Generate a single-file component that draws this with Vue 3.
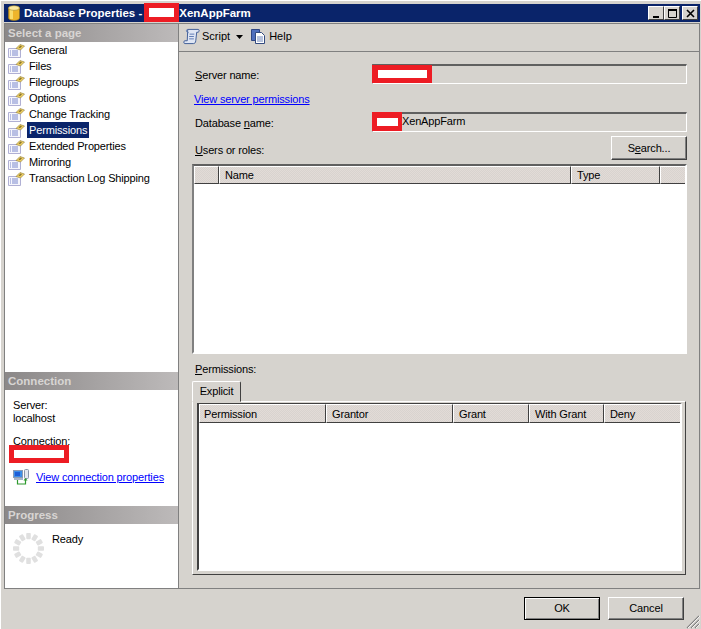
<script setup>
const pages = ['General','Files','Filegroups','Options','Change Tracking','Permissions','Extended Properties','Mirroring','Transaction Log Shipping']
const userCols = [{ n: '', w: 25 }, { n: 'Name', w: 352 }, { n: 'Type', w: 89 }, { n: '', w: 26 }]
const permCols = [{ n: 'Permission', w: 127 }, { n: 'Grantor', w: 127 }, { n: 'Grant', w: 76 }, { n: 'With Grant', w: 75 }, { n: 'Deny', w: 78 }]
const spokes = Array.from({ length: 12 }, (_, i) => i * 30)
</script>

<template>
  <div class="window">
    <div class="titlebar">
      <svg class="dbicon" width="12" height="16" viewBox="0 0 12 16">
        <path d="M.5 3v10c0 1.300 2.300 2.500 5.500 2.500s5.500-1.200 5.500-2.500V3z" fill="#eeb52c" stroke="#9a7a20" stroke-width=".6"/>
        <rect x="2" y="4" width="3" height="10" fill="#f9dc6c"/>
        <ellipse cx="6" cy="3" rx="5.500" ry="2.300" fill="#fbe9a0" stroke="#a58a2c" stroke-width=".6"/>
      </svg>
      <span class="titletext">Database Properties -</span>
      <span class="redact title-redact"><i></i></span>
      <span class="titletext">XenAppFarm</span>
      <span class="caps">
        <button class="cap"><svg width="9" height="9" viewBox="0 0 9 9"><rect x="1" y="7" width="6" height="2"/></svg></button>
        <button class="cap"><svg width="9" height="9" viewBox="0 0 9 9"><path d="M.5 1.500h8v7h-8z" fill="none" stroke="#000"/><rect y="0" width="9" height="2"/></svg></button>
        <button class="cap capx"><svg width="9" height="9" viewBox="0 0 9 9"><path d="M1 1l7 7M8 1L1 8" stroke="#000" stroke-width="1.600"/></svg></button>
      </span>
    </div>

    <div class="body">
      <aside class="side">
        <h3 class="sechead">Select a page</h3>
        <ul class="pages">
          <li v-for="p in pages" :key="p">
            <svg class="pageicon" width="17" height="15" viewBox="0 0 17 15">
              <path d="M.5 5.500h12v9H.5z" fill="#f6f6fc" stroke="#b0b0d4"/>
              <path d="M2 8h1M4 8h6M2 10h1M4 10h6M2 12h1M4 12h6" stroke="#7a88cc"/>
              <path d="M8 5.500l4-4 4.500 1.500-4 4z" fill="#f0d060" stroke="#8d7a3c" stroke-width=".6"/>
              <path d="M10.500 4.500l2-2 1.500.7-2 2z" fill="#8a7632"/>
            </svg>
            <span class="pagename" :class="{ sel: p === 'Permissions' }">{{ p }}</span>
          </li>
        </ul>

        <h3 class="sechead">Connection</h3>
        <div class="conn">
          <div>Server:</div>
          <div>localhost</div>
          <div class="connlabel">Connection:</div>
          <div class="redact conn-redact"><i></i></div>
          <div class="connlink">
            <svg width="17" height="16" viewBox="0 0 17 16">
              <rect x=".5" y="1.500" width="9" height="7" fill="#3d8ee8" stroke="#8a9ab4"/>
              <rect x="2" y="3" width="5" height="4" fill="#1d5ed8"/>
              <rect x="1" y="9" width="9" height="2" fill="#a8b4c8"/>
              <rect x="11.500" y=".5" width="4" height="9" rx="1" fill="#e4e8f0" stroke="#8a94a8"/>
              <path d="M4.500 11v4h8v-5" fill="none" stroke="#2e9a2e" stroke-width="1.200"/>
              <path d="M10.500 11.500l2-2.500 2 2.500z" fill="#2e9a2e"/>
            </svg>
            <a class="link">View connection properties</a>
          </div>
        </div>

        <h3 class="sechead">Progress</h3>
        <div class="prog">
          <svg width="31" height="31" viewBox="0 0 30 30">
            <rect v-for="a in spokes" :key="a" x="12.800" y="0" width="4.400" height="6" rx=".8" fill="#e0e0e0" :transform="`rotate(${a} 15 15)`"/>
          </svg>
          <span class="ready">Ready</span>
        </div>
      </aside>

      <main class="main">
        <div class="toolbar">
          <span class="tool">
            <svg width="17" height="17" viewBox="0 0 18 17">
              <path d="M5 1h11c1.500 0 1.500 2.500 0 3h-1.500l-1 9c-.2 2-1 3-2.500 3H2C.500 16 .500 13 2 13h2.500z" fill="#dfe6f4" stroke="#3c5a96"/>
              <path d="M5 1C3.500 1 3 3 4.500 4l1.500.5M7 6h5M6.500 8.500h5M6.500 11h5" fill="none" stroke="#5a76b0"/>
            </svg>
            Script
            <svg class="caret" width="7" height="4" viewBox="0 0 7 4"><path d="M0 0h7L3.500 4z"/></svg>
          </span>
          <span class="sep"></span>
          <span class="tool">
            <svg width="17" height="17" viewBox="0 0 17 17">
              <path d="M1.500 1.500h8v11h-8z" fill="#4f6fbd" stroke="#2f4684"/>
              <path d="M5.500 4.500h6l3 3v8h-9z" fill="#fff" stroke="#334b80"/>
              <path d="M7 9h6M7 11h6M7 13h6" stroke="#6f86bb"/>
            </svg>
            Help
          </span>
        </div>

        <div class="form">
          <div class="row">
            <label class="lbl"><u>S</u>erver name:</label>
            <div class="field"><span class="redact srv-redact"><i></i></span></div>
          </div>
          <a class="link perm-link">View server permissions</a>
          <div class="row">
            <label class="lbl">Database <u>n</u>ame:</label>
            <div class="field"><span class="redact db-redact"><i></i></span><span class="fieldtext">XenAppFarm</span></div>
          </div>
          <div class="usersbar">
            <label class="lbl"><u>U</u>sers or roles:</label>
            <button class="btn search">S<u>e</u>arch...</button>
          </div>
          <div class="grid users">
            <div class="ghead">
              <span v-for="(c, i) in userCols" :key="i" class="gcol" :style="{ width: c.w + 'px' }">{{ c.n }}</span>
            </div>
          </div>
          <label class="lbl permlbl"><u>P</u>ermissions:</label>
          <div class="tabs"><span class="tab">Explicit</span></div>
          <div class="tabpanel">
            <div class="grid perms">
              <div class="ghead">
                <span v-for="(c, i) in permCols" :key="i" class="gcol" :style="{ width: c.w + 'px' }">{{ c.n }}</span>
              </div>
            </div>
          </div>
        </div>
      </main>
    </div>

    <div class="footer">
      <button class="btn ok"><span>OK</span></button>
      <button class="btn cancel">Cancel</button>
      <svg class="grip" width="14" height="14" viewBox="0 0 14 14">
        <path d="M13 1L1 13M13 5L5 13M13 9L9 13" stroke="#808080" stroke-width="1.200"/>
        <path d="M14 1L2 13M14 5L6 13M14 9L10 13" stroke="#fff" stroke-width=".8"/>
      </svg>
    </div>
  </div>
</template>

<style>
html, body { margin: 0; background: #d4d0c8; }
</style>

<style scoped>
* { box-sizing: border-box; }
.window {
  width: 701px; height: 629px; display: flex; flex-direction: column;
  background: #d6d3ce; padding: 4px 1px 0 4px;
  box-shadow: inset 1px 1px 0 #fff;
  font: 11px/13px "Liberation Sans", Arial, sans-serif; color: #000;
  letter-spacing: -.15px;
  overflow: hidden;
}
.titlebar {
  height: 18px; background: #0a246a; display: flex; align-items: center; flex: none;
  color: #fff; font-weight: 700; padding-left: 4px;
}
.dbicon { margin-right: 4px; }
.titletext { font-size: 11.5px; letter-spacing: 0; }
.redact { background: #ed1c24; display: flex; align-items: center; justify-content: center; flex: none; }
.redact i { display: block; background: #fff; }
.title-redact { width: 35px; height: 19px; margin-left: 2px; align-self: flex-start; margin-top: -1px; }
.title-redact i { width: 25px; height: 9px; }
.caps { margin-left: auto; display: flex; margin-right: 2px; }
.cap {
  width: 16px; height: 14px; padding: 0; background: #d6d3ce;
  border: 1px solid; border-color: #fff #404040 #404040 #fff;
  display: flex; align-items: center; justify-content: center;
}
.cap.capx { margin-left: 2px; }
.body {
  height: 566px; flex: none; margin-top: 1px; display: flex;
  border: 1px solid #808080;
}
.side { width: 174px; background: #fff; flex: none; border-right: 1px solid #808080; display: flex; flex-direction: column; }
.sechead {
  margin: 0; height: 18px; flex: none; padding: 3px 0 0 3px; font-size: 11.5px; line-height: 13px; font-weight: 700; color: #d8d5d3;
  letter-spacing: 0;
  background: linear-gradient(90deg, #8b8888, #bdbaba);
}
.pages { list-style: none; margin: 0; padding: 0; height: 330px; flex: none; }
.pages li { height: 16px; display: flex; align-items: center; padding-left: 3px; }
.pageicon { flex: none; margin-right: 2px; }
.pagename { padding: 0 2px; height: 16px; line-height: 16px; }
.pagename.sel { background: #0a246a; color: #fff; }
.conn { height: 116px; flex: none; padding-top: 9px; }
.conn > div { padding-left: 8px; }
.conn .connlabel { margin-top: 10px; }
.conn .conn-redact { padding: 0; margin-left: 4px; margin-top: -3px; width: 60px; height: 18px; }
.conn-redact i { width: 50px; height: 8px; }
.connlink { display: flex; align-items: center; gap: 6px; margin-top: 6px; height: 16px; }
.link { color: #0000ff; text-decoration: underline; }
.prog { flex: 1; display: flex; padding: 9px 0 0 8px; gap: 8px; }
.main { flex: 1; display: flex; flex-direction: column; min-width: 0; }
.toolbar { height: 28px; flex: none; border-bottom: 1px solid #808080; display: flex; align-items: center; padding: 0 0 2px 4px; letter-spacing: 0; }
.tool { display: flex; align-items: center; gap: 2px; }
.caret { margin-left: 4px; }
.sep { width: 7px; }
.form { flex: 1; padding: 12px 0 0 13px; display: flex; flex-direction: column; }
.row { display: flex; height: 20px; align-items: center; }
.lbl { display: block; }
.row .lbl { width: 180px; padding: 2px 0 0 3px; }
.field {
  width: 315px; height: 20px; display: flex; align-items: center;
  background: #d6d3ce; border: 1px solid; border-color: #606060 #fff #fff #808080;
  border-top-width: 2px;
}
.srv-redact { width: 60px; height: 18px; margin: -1px 0 0 -1px; align-self: flex-start; }
.srv-redact i { width: 49px; height: 8px; }
.db-redact { width: 30px; height: 19px; margin: -2px 0 0 -1px; align-self: flex-start; }
.db-redact i { width: 21px; height: 8px; }
.perm-link { margin-top: 9px; height: 19px; padding-left: 2px; display: block; line-height: 13px; }
.fieldtext { padding-bottom: 2px; }
.usersbar { height: 32px; width: 495px; display: flex; justify-content: space-between; padding: 4px 0 0 3px; }
.usersbar .lbl { margin-top: 8px; }
.btn {
  font: inherit; letter-spacing: inherit; padding: 0; background: #d6d3ce; color: #000;
  border: 1px solid; border-color: #fff #404040 #404040 #fff;
  box-shadow: inset -1px -1px 0 #808080;
}
.search { width: 76px; height: 24px; }
.grid {
  background: #fff; border: 2px solid; border-color: #606060 #fff #fff #808080;
  overflow: hidden;
}
.users { width: 495px; height: 190px; flex: none; }
.ghead { display: flex; height: 18px; background: #d6d3ce; }
.gcol {
  height: 18px; flex: none; padding: 2px 0 0 5px; border: 1px solid;
  border-color: #fff #404040 #404040 #fff;
  background: repeating-conic-gradient(#e2dbd7 0 25%, #d8d3cf 0 50%) 0 0 / 2px 2px;
  line-height: 13px;
}
.permlbl { margin-top: 9px; margin-left: 3px; height: 18px; }
.tabs { height: 20px; display: flex; }
.tab {
  width: 49px; height: 21px; background: #d6d3ce; position: relative; z-index: 1; text-align: center;
  border: 1px solid; border-color: #fff #404040 #d6d3ce #fff; border-radius: 2px 2px 0 0; padding-top: 3px;
}
.tabpanel {
  width: 494px; height: 174px; padding: 1px 4px 3px 4px;
  border: 1px solid; border-color: #fff #404040 #404040 #fff;
}
.perms { width: 485px; height: 168px; border-top-width: 1px; border-color: #404040 #fff #fff #404040; }
.perms .ghead, .perms .gcol { height: 19px; }
.perms .gcol { padding-top: 3px; }
.perms .gcol:first-child { padding-left: 4px; }
.footer { flex: 1; display: flex; align-items: flex-start; padding: 8px 0 0 520px; gap: 8px; position: relative; }
.footer .btn { width: 76px; height: 23px; }
.ok { border-color: #000 !important; box-shadow: inset 1px 1px 0 #fff, inset -1px -1px 0 #808080; }
.grip { position: absolute; right: 0; bottom: 0; }
</style>
